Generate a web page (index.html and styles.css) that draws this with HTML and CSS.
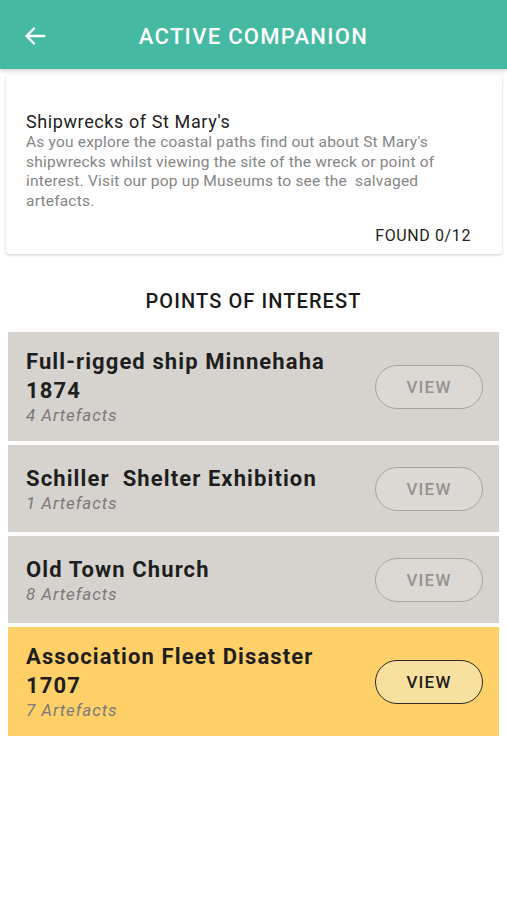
FILE: index.html
```html
<!DOCTYPE html>
<html lang="en">
<head>
    <meta charset="UTF-8">
    <meta name="viewport" content="width=device-width, initial-scale=1.0">
    <title>Active Companion</title>
    <link rel="stylesheet" href="styles.css">
</head>
<body>
    <header class="top-bar">
      <div class="back">
        <svg width="22" height="18" viewBox="0 0 22 18">
          <path d="M20.5 9H2.5M10 1.5L2.5 9L10 16.5" fill="none" stroke="#fff" stroke-width="2.4" stroke-linecap="round" stroke-linejoin="round"/>
        </svg>
      </div>
      <h1>ACTIVE COMPANION</h1>
      <div class="spacer"></div>
    </header>

    <div class="intro-card">
      <h2>Shipwrecks of St Mary's</h2>
      <p class="intro-text">As you explore the coastal paths find out about St Mary's shipwrecks whilst viewing the site of the wreck or point of interest. Visit our pop up Museums to see the&nbsp; salvaged artefacts.</p>
      <p class="found">FOUND 0/12</p>
    </div>

    <h3 class="section-title">POINTS OF INTEREST</h3>

    <div class="poi-list">
      <div class="poi">
        <div class="poi-info">
          <p class="poi-name">Full-rigged ship Minnehaha 1874</p>
          <p class="poi-count">4 Artefacts</p>
        </div>
        <button class="view-btn">VIEW</button>
      </div>
      <div class="poi">
        <div class="poi-info">
          <p class="poi-name">Schiller&nbsp; Shelter Exhibition</p>
          <p class="poi-count">1 Artefacts</p>
        </div>
        <button class="view-btn">VIEW</button>
      </div>
      <div class="poi">
        <div class="poi-info">
          <p class="poi-name">Old Town Church</p>
          <p class="poi-count">8 Artefacts</p>
        </div>
        <button class="view-btn">VIEW</button>
      </div>
      <div class="poi active">
        <div class="poi-info">
          <p class="poi-name">Association Fleet Disaster 1707</p>
          <p class="poi-count">7 Artefacts</p>
        </div>
        <button class="view-btn">VIEW</button>
      </div>
    </div>
</body>
</html>
```

FILE: styles.css
```css
* {
    margin: 0;
    padding: 0;
    box-sizing: border-box;
}

body {
    font-family: Roboto, "Liberation Sans", sans-serif;
    background-color: #fff;
    color: #1e1e1e;
}

.top-bar {
    height: 69px;
    background-color: #45b9a1;
    display: flex;
    align-items: center;
    box-shadow: 0 2px 4px rgba(0, 0, 0, 0.18);
}

.back,
.spacer {
    width: 70px;
    padding-left: 24px;
    display: flex;
    align-items: center;
    padding-top: 2px;
}

.top-bar h1 {
    flex: 1;
    text-align: center;
    color: #fff;
    font-size: 22px;
    font-weight: 500;
    letter-spacing: 1.3px;
    padding-top: 4px;
}

.intro-card {
    margin: 6px 5px 0 6px;
    padding: 36px 31px 8px 20px;
    border-radius: 4px;
    box-shadow: 0 1px 3px rgba(0, 0, 0, 0.2);
}

.intro-card h2 {
    font-size: 18px;
    font-weight: 400;
    line-height: 22px;
    letter-spacing: 0.6px;
    color: #222;
}

.intro-text {
    font-size: 15.5px;
    line-height: 19.5px;
    letter-spacing: 0.2px;
    color: #858585;
}

.found {
    margin-top: 15px;
    text-align: right;
    font-size: 16px;
    line-height: 20px;
    letter-spacing: 0.6px;
    color: #222;
}

.section-title {
    margin-top: 35px;
    text-align: center;
    font-size: 20px;
    line-height: 24px;
    font-weight: 500;
    letter-spacing: 1.1px;
    color: #1a1a1a;
}

.poi-list {
    margin: 19px 8px 0 8px;
    display: flex;
    flex-direction: column;
    gap: 4px;
}

.poi {
    min-height: 87px;
    padding: 15px 16px 15px 18px;
    background-color: #d6d3ce;
    display: flex;
    align-items: center;
    gap: 16px;
}

.poi.active {
    background-color: #ffd068;
}

.poi-info {
    flex: 1;
}

.poi-name {
    font-size: 22px;
    line-height: 29px;
    font-weight: 700;
    letter-spacing: 1.1px;
    color: #1e1e1e;
    max-width: 320px;
}

.poi-count {
    font-size: 17px;
    line-height: 21px;
    font-style: italic;
    letter-spacing: 0.9px;
    color: #7a7a7a;
}

.view-btn {
    width: 108px;
    height: 44px;
    border-radius: 22px;
    border: 1.5px solid #a6a4a0;
    background-color: rgba(255, 255, 255, 0.15);
    color: #959390;
    font-family: Roboto, "Liberation Sans", sans-serif;
    font-size: 17px;
    font-weight: 500;
    letter-spacing: 1.2px;
}

.poi.active .view-btn {
    border-color: #2a2a2a;
    background-color: #f8e09f;
    color: #1e1e1e;
}
```
